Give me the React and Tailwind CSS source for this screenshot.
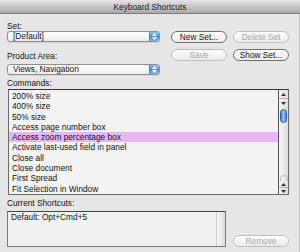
const commands = [
  "200% size",
  "400% size",
  "50% size",
  "Access page number box",
  "Access zoom percentage box",
  "Activate last-used field in panel",
  "Close all",
  "Close document",
  "First Spread",
  "Fit Selection in Window",
];

function Stepper() {
  return (
    <div className="w-[10px] h-full flex flex-col items-center justify-center gap-[1px] rounded-r-[3px] bg-gradient-to-b from-[#8fc0f2] via-[#4a8ee0] to-[#7fb4ee] border-l border-[#5a7fae]">
      <svg width="5" height="3" viewBox="0 0 5 3"><path d="M0 3 L2.5 0 L5 3 Z" fill="#fff" /></svg>
      <svg width="5" height="3" viewBox="0 0 5 3"><path d="M0 0 L2.5 3 L5 0 Z" fill="#fff" /></svg>
    </div>
  );
}

function Popup({ value }) {
  return (
    <div className="h-[11px] w-[153px] flex items-center rounded-[3px] border border-[#8e8e8e] bg-gradient-to-b from-white to-[#ececec] shadow-[0_1px_0_rgba(0,0,0,0.08)]">
      <span className="flex-1 pl-[5px] leading-[9px] text-[#111]">{value}</span>
      <Stepper />
    </div>
  );
}

function Pill({ label, disabled }) {
  return (
    <button
      className={
        "h-[12px] w-[56px] rounded-full border leading-[10px] text-center bg-gradient-to-b from-white to-[#eaeaea] " +
        (disabled ? "border-[#bdbdbd] text-[#a6a6a6]" : "border-[#6f6f6f] text-[#111]")
      }
    >
      {label}
    </button>
  );
}

function Arrow({ up }) {
  return (
    <svg width="5" height="3" viewBox="0 0 5 3">
      <path d={up ? "M0 3 L2.5 0 L5 3 Z" : "M0 0 L2.5 3 L5 0 Z"} fill="#333" />
    </svg>
  );
}

function ScrollBar() {
  return (
    <div className="w-[10px] h-full flex flex-col items-center border-l border-[#555] bg-gradient-to-r from-[#f7f7f7] to-[#dcdcdc]">
      <div className="h-[8px] flex items-center"><Arrow up /></div>
      <div className="w-full h-[1px] bg-[#b5b5b5]" />
      <div className="h-[8px] flex items-center"><Arrow /></div>
      <div className="mt-[2px] w-[7px] h-[14px] rounded-full border border-[#2a5c9e] bg-gradient-to-r from-[#3e7fd6] via-[#9cc8f6] to-[#3e7fd6]" />
      <div className="flex-1" />
      <div className="w-[8px] h-[6px] rounded-t-full border-t border-x border-[#bdbdbd]" />
      <div className="h-[6px] flex items-center"><Arrow up /></div>
      <div className="w-full h-[1px] bg-[#b5b5b5]" />
      <div className="h-[6px] flex items-center"><Arrow /></div>
    </div>
  );
}

export default function App() {
  return (
    <div
      className="w-[300px] h-[252px] overflow-hidden flex flex-col bg-[#e6e6e6] text-[8.3px] leading-[10px]"
      style={{ fontFamily: '"Liberation Sans", Arial, sans-serif' }}
    >
      {/* Barra de título */}
      <div className="h-[14px] flex items-center justify-center bg-gradient-to-b from-[#e4e4e4] to-[#a9a9a9] border-b border-[#7d7d7d] text-[#222]">
        Keyboard Shortcuts
      </div>

      <div className="flex-1 pl-[7px] pr-[8px] pt-[7px] border-r border-[#c4c4c4]">
        <div className="flex">
          <div className="w-[153px] flex flex-col">
            <div className="h-[10px] text-[#111]">Set:</div>
            <Popup value="[Default]" />
            <div className="h-[10px] mt-[9px] text-[#111]">Product Area:</div>
            <div className="mt-[3px]"><Popup value="Views, Navigation" /></div>
          </div>
          <div className="ml-[11px] mt-[10px] grid grid-cols-[56px_56px] gap-x-[6px] gap-y-[6px] content-start">
            <Pill label="New Set..." />
            <Pill label="Delete Set" disabled />
            <Pill label="Save" disabled />
            <Pill label="Show Set..." />
          </div>
        </div>

        <div className="h-[10px] mt-[3px] text-[#111]">Commands:</div>

        {/* Lista de comandos */}
        <div className="mt-[1px] ml-[1px] w-[281px] h-[106px] flex bg-[#f3f3f3] border border-[#6a6a6a] border-t-[#333]">
          <div className="flex-1 pt-[1px]">
            {commands.map((c, i) => (
              <div
                key={c}
                className={"h-[10.3px] leading-[10.3px] pl-[3px] text-[#111] " + (i === 4 ? "bg-[#e6b6f5]" : "")}
              >
                {c}
              </div>
            ))}
          </div>
          <ScrollBar />
        </div>

        <div className="h-[10px] mt-[3px] text-[#111]">Current Shortcuts:</div>

        <div className="mt-[3px] flex items-end">
          <div className="w-[219px] h-[36px] flex bg-[#f1f1f1] border border-[#777] border-t-[#444]">
            <div className="flex-1 pl-[3px] text-[#111]">Default: Opt+Cmd+5</div>
            <div className="w-[9px] h-full bg-gradient-to-r from-[#f7f7f7] to-[#dedede] border-l border-[#cfcfcf]" />
          </div>
          <div className="ml-[7px]">
            <Pill label="Remove" disabled />
          </div>
        </div>
      </div>
    </div>
  );
}
